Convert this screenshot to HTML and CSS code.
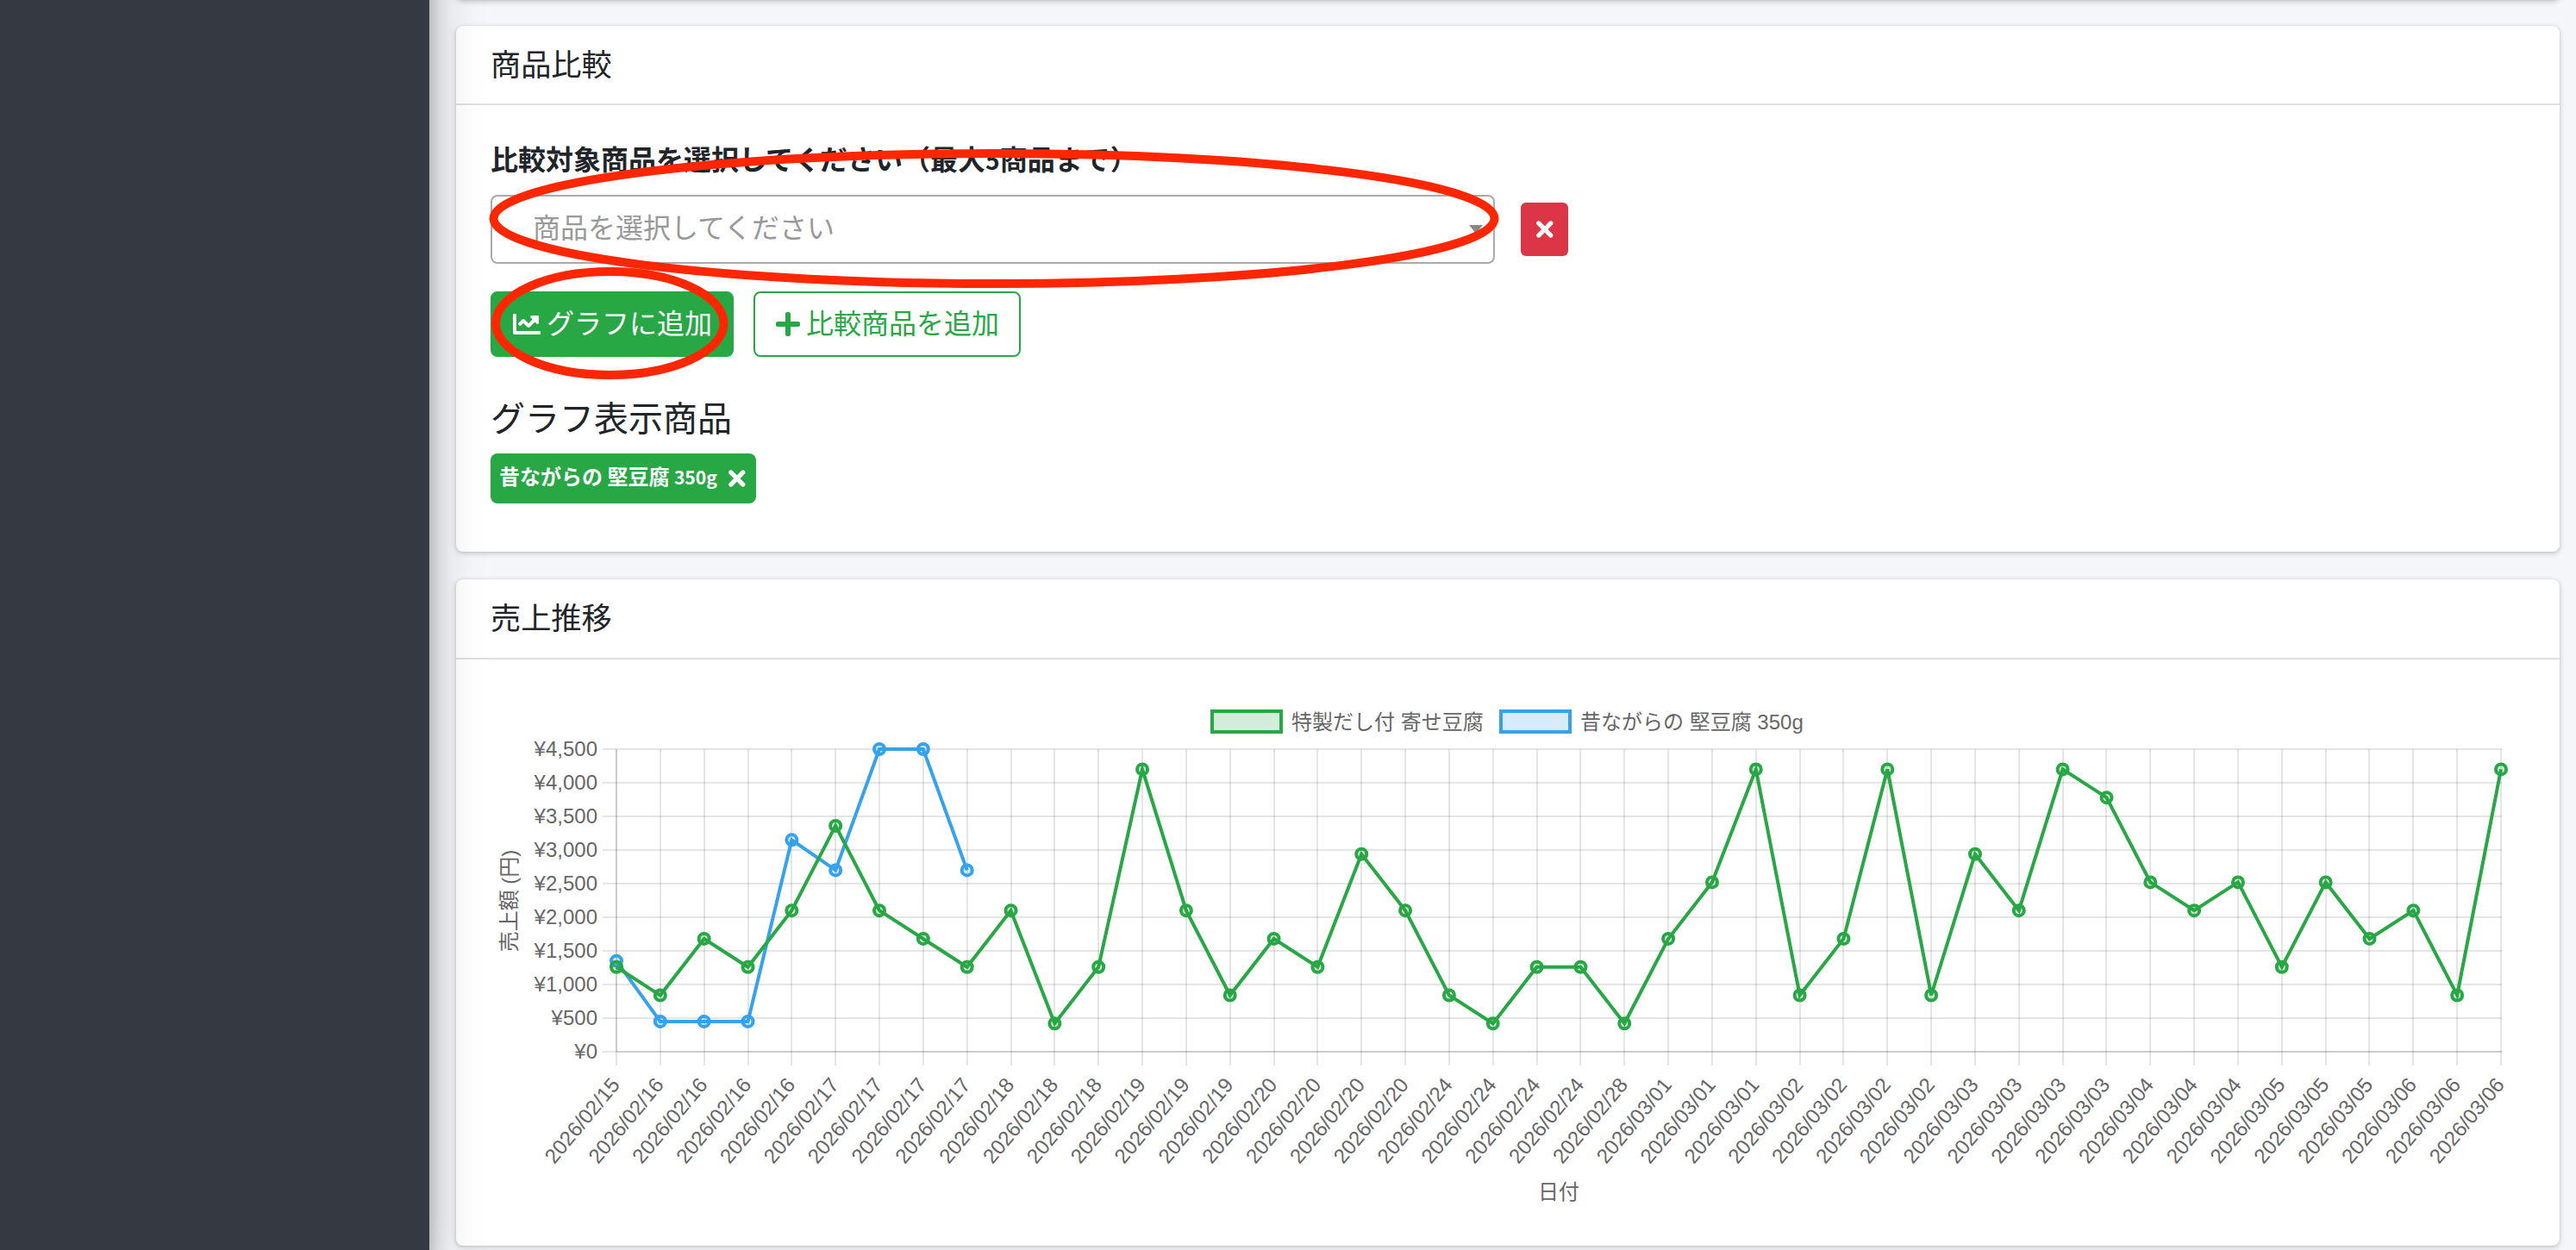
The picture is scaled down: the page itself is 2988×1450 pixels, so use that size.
FILE: index.html
```html
<!DOCTYPE html>
<html lang="ja">
<head>
    <meta charset="UTF-8">
    <meta name="viewport" content="width=device-width, initial-scale=1.0">
    <title>売上分析</title>
    <link rel="stylesheet" href="styles.css">
</head>
<body>
    <aside class="sidebar"></aside>

    <main class="content">
        <div class="card card-prev"></div>

        <div class="card card-compare">
            <div class="card-header">商品比較</div>
            <div class="card-body">
                <label class="form-label">比較対象商品を選択してください（最大<span class="num">5</span>商品まで）</label>
                <div class="select-row">
                    <div class="select">
                        <span class="placeholder">商品を選択してください</span>
                        <span class="arrow"></span>
                    </div>
                    <button class="btn-remove">
                        <svg class="icon-times" viewBox="0 0 320 512"><path d="M310.6 150.6c12.5-12.5 12.5-32.8 0-45.3s-32.8-12.5-45.3 0L160 210.7 54.6 105.4c-12.5-12.5-32.8-12.5-45.3 0s-12.5 32.8 0 45.3L114.7 256 9.4 361.4c-12.5 12.5-12.5 32.8 0 45.3s32.8 12.5 45.3 0L160 301.3 265.4 406.6c12.5 12.5 32.8 12.5 45.3 0s12.5-32.8 0-45.3L205.3 256 310.6 150.6z"/></svg>
                    </button>
                </div>
                <div class="btn-row">
                    <button class="btn btn-success">
                        <svg class="icon" viewBox="0 0 512 512"><path d="M496 384H64V80c0-8.84-7.16-16-16-16H16C7.16 64 0 71.16 0 80v336c0 17.67 14.33 32 32 32h464c8.84 0 16-7.16 16-16v-32c0-8.84-7.16-16-16-16zM464 96H345.94c-21.38 0-32.09 25.85-16.97 40.97l32.4 32.4L288 242.75l-73.37-73.37c-12.5-12.5-32.76-12.5-45.25 0l-68.69 68.69c-6.25 6.25-6.25 16.38 0 22.63l22.62 22.62c6.25 6.25 16.38 6.25 22.63 0L192 237.25l73.37 73.37c12.5 12.5 32.76 12.5 45.25 0l96-96 32.4 32.4c15.12 15.12 40.97 4.41 40.97-16.97V112c.01-8.84-7.15-16-15.99-16z"/></svg>
                        <span>グラフに追加</span>
                    </button>
                    <button class="btn btn-outline">
                        <svg class="icon-plus" viewBox="0 0 448 512"><path d="M416 208H272V64c0-17.67-14.33-32-32-32h-32c-17.67 0-32 14.33-32 32v144H32c-17.67 0-32 14.33-32 32v32c0 17.67 14.33 32 32 32h144v144c0 17.67 14.33 32 32 32h32c17.67 0 32-14.33 32-32V304h144c17.67 0 32-14.33 32-32v-32c0-17.67-14.33-32-32-32z"/></svg>
                        <span>比較商品を追加</span>
                    </button>
                </div>
                <h5 class="sub-title">グラフ表示商品</h5>
                <div class="badge">
                    <span>昔ながらの 堅豆腐 <span class="num">350g</span></span>
                    <svg class="icon-times" viewBox="0 0 320 512"><path d="M310.6 150.6c12.5-12.5 12.5-32.8 0-45.3s-32.8-12.5-45.3 0L160 210.7 54.6 105.4c-12.5-12.5-32.8-12.5-45.3 0s-12.5 32.8 0 45.3L114.7 256 9.4 361.4c-12.5 12.5-12.5 32.8 0 45.3s32.8 12.5 45.3 0L160 301.3 265.4 406.6c12.5 12.5 32.8 12.5 45.3 0s12.5-32.8 0-45.3L205.3 256 310.6 150.6z"/></svg>
                </div>
            </div>
        </div>

        <div class="card card-chart">
            <div class="card-header">売上推移</div>
            <svg id="chart" class="chart" viewBox="529 765 2440 680"></svg>
        </div>
    </main>

    <!-- 赤丸の注釈 -->
    <svg class="marks" viewBox="0 0 2988 1450">
        <ellipse cx="1153" cy="253.5" rx="580.5" ry="75.5"/>
        <ellipse cx="707.2" cy="375" rx="132.3" ry="60"/>
    </svg>

    <script src="chart.js"></script>
</body>
</html>
```
FILE: styles.css
```css
* {
    box-sizing: border-box;
}
body {
    margin: 0;
    display: flex;
    height: 1450px;
    overflow: hidden;
    background: #f4f6f9;
    color: #212529;
    font-family: "Noto Sans CJK JP", sans-serif;
    font-size: 32px;
}
.sidebar {
    position: relative;
    z-index: 2;
    width: 498px;
    margin-top: -100px;
    flex: none;
    background: #343a40;
    box-shadow: 0 28px 56px rgba(0, 0, 0, .25), 0 20px 20px rgba(0, 0, 0, .22);
}
.content {
    flex: 1;
    height: 1450px;
    padding: 0 19px 0 31px;
}
.card {
    background: #fff;
    border-radius: 8px;
    box-shadow: 0 0 2px rgba(0, 0, 0, .125), 0 2px 6px rgba(0, 0, 0, .2);
    margin-bottom: 32px;
}
.card-prev {
    height: 20px;
    margin-top: -20px;
    margin-bottom: 30px;
}
.card-compare {
    height: 610px;
}
.card-chart {
    height: 773px;
    margin-bottom: 0;
}
.card-header {
    height: 92px;
    padding: 0 40px;
    border-bottom: 2px solid #dfdfdf;
    font-size: 35.2px;
    line-height: 86px;
}
.card-chart .card-header {
    height: 93px;
}
.card-body {
    padding: 40px;
}
.form-label {
    display: block;
    height: 48px;
    margin-bottom: 16px;
    font-weight: 700;
    line-height: 43px;
}
.num {
    font-size: .88em;
}
.select-row {
    display: flex;
    align-items: center;
    gap: 30px;
}
.select {
    display: flex;
    align-items: center;
    justify-content: space-between;
    width: 1165px;
    height: 80px;
    padding: 0 12px 0 47px;
    border: 2px solid #aaa;
    border-radius: 8px;
    color: #999;
}
.placeholder {
    line-height: 68px;
    padding-bottom: 8px;
}
.arrow {
    border: 8px solid transparent;
    border-top: 10px solid #888;
    border-bottom: 0;
}
.btn-remove {
    display: flex;
    align-items: center;
    justify-content: center;
    width: 55px;
    height: 62px;
    padding: 0;
    border: 0;
    border-radius: 6px;
    background: #dc3545;
}
.icon-times {
    width: 17.6px;
    height: 32px;
    flex: none;
    overflow: visible;
    fill: #fff;
    stroke: #fff;
    stroke-width: 32;
}
.btn-row {
    display: flex;
    gap: 23px;
    margin-top: 32px;
}
.btn {
    display: flex;
    align-items: center;
    height: 76px;
    padding: 0 24px;
    border: 2px solid #28a745;
    border-radius: 8px;
    font-family: inherit;
    font-size: 32px;
    line-height: 66px;
}
.btn span {
    padding-bottom: 6px;
    white-space: nowrap;
}
.btn-success {
    width: 282px;
    background: #28a745;
    color: #fff;
}
.btn-outline {
    width: 310px;
    background: #fff;
    color: #28a745;
}
.icon {
    width: 32px;
    height: 32px;
    margin-right: 7px;
    flex: none;
    fill: currentColor;
}
.icon-plus {
    width: 28px;
    height: 32px;
    margin-right: 7px;
    flex: none;
    fill: currentColor;
}
.sub-title {
    height: 48px;
    margin: 48px 0 16px;
    font-size: 40px;
    font-weight: 400;
    line-height: 42px;
}
.badge {
    display: flex;
    align-items: center;
    justify-content: space-between;
    width: 308px;
    height: 58px;
    padding: 0 13px 0 10px;
    border-radius: 8px;
    background: #28a745;
    color: #fff;
    font-size: 24px;
    font-weight: 700;
    white-space: nowrap;
}
.badge > span {
    padding-bottom: 8px;
}
.chart {
    display: block;
    width: 2440px;
    height: 680px;
    font-family: "Liberation Sans", "Noto Sans CJK JP", sans-serif;
    font-size: 24px;
}
.chart text {
    fill: #666;
}
.grid {
    stroke: rgba(0, 0, 0, .1);
    stroke-width: 2;
    shape-rendering: crispEdges;
}
.line {
    fill: none;
    stroke-width: 4;
}
.green {
    stroke: #28a745;
}
.blue {
    stroke: #36a2eb;
}
.green-fill {
    fill: rgba(40, 167, 69, .2);
    stroke: #28a745;
    stroke-width: 4;
}
.blue-fill {
    fill: rgba(54, 162, 235, .2);
    stroke: #36a2eb;
    stroke-width: 4;
}
.marks {
    position: absolute;
    z-index: 3;
    top: 0;
    left: 0;
    width: 2988px;
    height: 1450px;
    pointer-events: none;
    fill: none;
    stroke: #ff2600;
    stroke-width: 10;
}
```
FILE: chart.js
```js
// 売上データ
const green = [1260, 840, 1680, 1260, 2100, 3360, 2100, 1680, 1260, 2100, 420, 1260, 4200, 2100, 840,
    1680, 1260, 2940, 2100, 840, 420, 1260, 1260, 420, 1680, 2520, 4200, 840, 1680, 4200, 840, 2940,
    2100, 4200, 3780, 2520, 2100, 2520, 1260, 2520, 1680, 2100, 840, 4200];
const blue = [1350, 450, 450, 450, 3150, 2700, 4500, 4500, 2700];

// 日付と件数
const dates = [["02/15", 1], ["02/16", 4], ["02/17", 4], ["02/18", 3], ["02/19", 3], ["02/20", 4],
    ["02/24", 4], ["02/28", 1], ["03/01", 3], ["03/02", 4], ["03/03", 4], ["03/04", 3], ["03/05", 3], ["03/06", 3]];
const labels = dates.flatMap(([d, n]) => Array(n).fill("2026/" + d));

const left = 715, right = 2901, top_ = 869, bottom = 1220;
const px = i => left + (right - left) * i / (labels.length - 1);
const py = v => bottom - (bottom - top_) * v / 4500;

let svg = "";

function gridLine(x1, y1, x2, y2) {
    svg += `<line class="grid" x1="${x1}" y1="${y1}" x2="${x2}" y2="${y2}"/>`;
}

// 横の目盛り
for (let v = 0; v <= 4500; v += 500) {
    gridLine(699, py(v), right + 1, py(v));
    svg += `<text x="693" y="${py(v) + 8}" text-anchor="end">¥${v.toLocaleString("en-US")}</text>`;
}

// 縦の目盛り
labels.forEach((label, i) => {
    const x = Math.round(px(i));
    gridLine(x, top_, x, 1236);
    svg += `<text transform="translate(${px(i) - 1} 1254) rotate(-50)" y="8" text-anchor="end">${label}</text>`;
});
gridLine(left, top_, left, bottom);
gridLine(left, bottom, right + 1, bottom);

// 折れ線
function drawLine(data, color) {
    const points = data.map((v, i) => px(i) + "," + py(v)).join(" ");
    svg += `<polyline class="line ${color}" points="${points}"/>`;
    data.forEach((v, i) => {
        svg += `<circle class="${color}-fill" cx="${px(i)}" cy="${py(v)}" r="6"/>`;
    });
}
drawLine(blue, "blue");
drawLine(green, "green");

// 凡例
svg += `<rect class="green-fill" x="1406" y="825" width="80" height="24"/>
    <text x="1498" y="846">特製だし付 寄せ豆腐</text>
    <rect class="blue-fill" x="1741" y="825" width="80" height="24"/>
    <text x="1833" y="846">昔ながらの 堅豆腐 350g</text>`;

// 軸タイトル
svg += `<text x="1808" y="1391" text-anchor="middle">日付</text>
    <text transform="translate(599 1045) rotate(-90)" text-anchor="middle">売上額 (円)</text>`;

document.getElementById("chart").innerHTML = svg;
```
